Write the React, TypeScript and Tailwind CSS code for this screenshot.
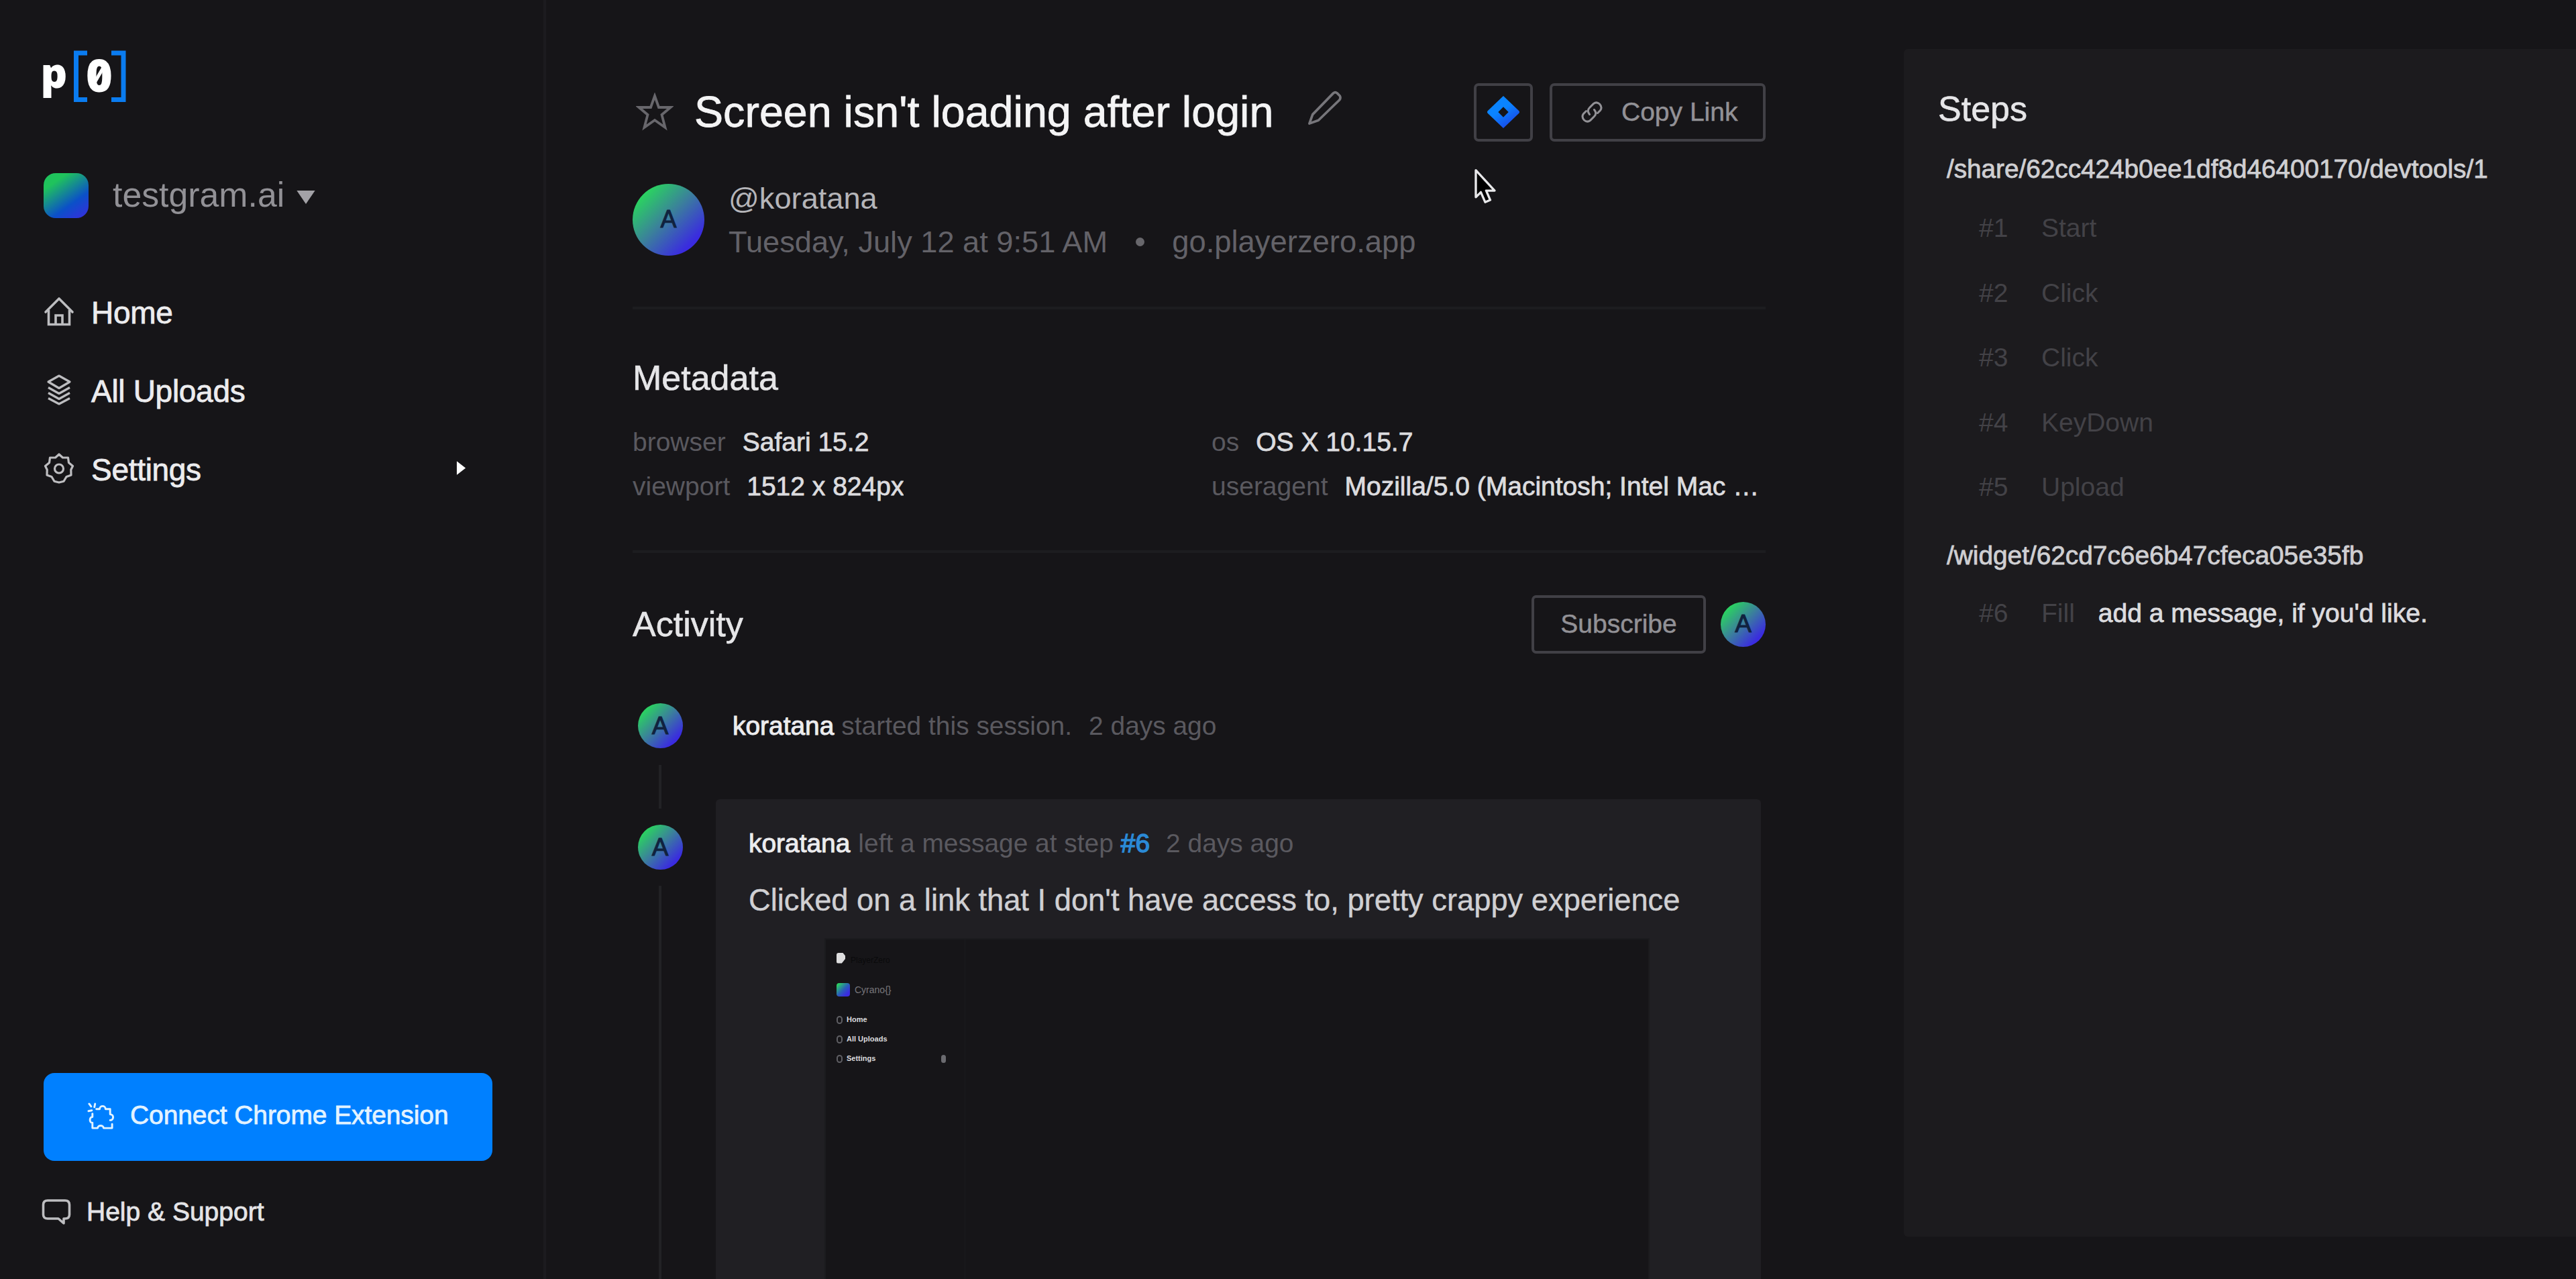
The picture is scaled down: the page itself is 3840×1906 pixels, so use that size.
import type { ReactNode } from "react";

const steps = [
  { id: "#1", label: "Start" },
  { id: "#2", label: "Click" },
  { id: "#3", label: "Click" },
  { id: "#4", label: "KeyDown" },
  { id: "#5", label: "Upload" },
];

const Logo = () => (
  <svg className="-ml-[15px] h-[130px] w-[150px] overflow-visible" viewBox="50 40 150 130" fill="none">
    <path d="M130 79H113.500V148.500H130M166 79H184V148.500H166" stroke="#0a7cf0" strokeWidth="7" />
    <text x="60.500" y="131" fill="#fff" fontFamily="Noto Sans, sans-serif" fontWeight="900" fontSize="62">
      p
    </text>
    <text
      x="148"
      y="137"
      fill="#fff"
      textAnchor="middle"
      fontFamily="Noto Sans, sans-serif"
      fontWeight="900"
      fontSize="68"
    >
      0
    </text>
    <path d="M141 123L155 99" stroke="#fff" strokeWidth="5" />
  </svg>
);

const HomeIcon = () => (
  <svg className="size-[46px]" viewBox="0 0 46 46" fill="none" stroke="currentColor" strokeWidth="3.6">
    <path d="M3 24L23 4L43 24" strokeLinecap="round" strokeLinejoin="round" />
    <path d="M7.500 21V42.500H38.500V21" />
    <path d="M18 42V29H28V42" />
  </svg>
);

const LayersIcon = () => (
  <svg className="size-[46px]" viewBox="0 0 46 46" fill="none" stroke="currentColor" strokeWidth="3.2" strokeLinejoin="round">
    <path d="M23 2L39 11L23 20.500L7 11Z" />
    <path d="M7 19.500L23 28.500L39 19.500" />
    <path d="M7 27.500L23 36.500L39 27.500" />
    <path d="M7 35.500L23 44L39 35.500" />
  </svg>
);

const GearIcon = () => (
  <svg className="size-[46px]" viewBox="0 0 46 46" fill="none" stroke="currentColor" strokeWidth="3.2" strokeLinejoin="round">
    <path d="M23 2L28.500 7L36.500 7L37.500 14.500L43.500 19.500L40.800 25L41 33L34 35.500L30 42.300L23 44L16 42.300L12 35.500L5 33L5.200 25L2.500 19.500L8.500 14.500L9.500 7L17.500 7Z" />
    <circle cx="23" cy="23.500" r="6.500" />
  </svg>
);

const PuzzleIcon = () => (
  <svg className="mt-1 size-[43px]" viewBox="0 0 44 44" fill="none" stroke="currentColor" strokeWidth="3" strokeLinecap="round" strokeLinejoin="round">
    <path d="M4 2L7 6M13 2L12 7M3 13L8 12" />
    <path d="M15 10H20C20 4 29 4 29 10H36V18C42 18 42 27 36 27" />
    <path d="M9 17V22C4 22 4 31 9 31V39H17C17 34 26 34 26 39H39V33" />
  </svg>
);

const ChatIcon = () => (
  <svg className="h-[42px] w-[46px]" viewBox="0 0 46 42" fill="none" stroke="currentColor" strokeWidth="3.6" strokeLinejoin="round">
    <path d="M10 4H36Q42.500 4 42.500 10.500V25Q42.500 31 36 31H34V38L26 31H10Q3.500 31 3.500 25V10.500Q3.500 4 10 4Z" />
  </svg>
);

const StarIcon = () => (
  <svg className="h-[58px] w-[56px]" viewBox="0 0 56 58" fill="none" stroke="currentColor" strokeWidth="3.800">
    <path d="M28 5L34 22H51.500L38.500 33L43.500 52L28 41L12.500 52L17.500 33L4.500 22H22Z" />
  </svg>
);

const PencilIcon = () => (
  <svg className="size-[52px]" viewBox="0 0 54 54" fill="none" stroke="currentColor" strokeWidth="3.800" strokeLinejoin="round">
    <path d="M3 51L8 37L40 4Q43 1.500 46 4L50 8Q52 11.500 49.500 14.500L17 46Z" />
  </svg>
);

const LinkIcon = () => (
  <svg className="size-[34px]" viewBox="0 0 34 34" fill="none" stroke="currentColor" strokeWidth="3" strokeLinecap="round">
    <path d="M13.500 20.500Q9 15 13.500 10.500L19.500 4.500Q24 1 28.500 5Q33 10 29.500 14.500L25.500 18.500" />
    <path d="M20.500 13.500Q25 19 20.500 23.500L14.500 29.500Q10 33 5.500 29Q1 24 4.500 19.500L8.500 15.500" />
  </svg>
);

const JiraIcon = () => (
  <svg className="size-[50px]" viewBox="0 0 52 52">
    <defs>
      <linearGradient id="jira" x1="0" y1="0" x2="0.7" y2="1">
        <stop offset="0.500" stopColor="#0a84ff" />
        <stop offset="1" stopColor="#1a45e8" />
      </linearGradient>
    </defs>
    <path
      fillRule="evenodd"
      fill="url(#jira)"
      d="M26 1L50 24Q52 26 50 28L26 51L2 28Q0 26 2 24ZM26 18L18 26L26 34L34 26Z"
    />
  </svg>
);

const Cursor = () => (
  <svg className="absolute left-[2196px] top-[250px] h-[56px] w-[36px]" viewBox="0 0 38 60">
    <path
      d="M4 4V47L12 39L19 55L27 51.500L20.500 36.500H34Z"
      fill="#000"
      stroke="#e8e8ea"
      strokeWidth="3.600"
      strokeLinejoin="round"
    />
  </svg>
);

const Avatar = ({ large }: { large?: boolean }) => (
  <div
    className={
      large
        ? "flex size-[107px] shrink-0 items-center justify-center rounded-full bg-[linear-gradient(135deg,#2bd062_16%,#3b7f9c_48%,#3a2be0_82%)] text-[36px] text-[#10223f] [-webkit-text-stroke:1px_#10223f]"
        : "flex size-[67px] shrink-0 items-center justify-center rounded-full bg-[linear-gradient(135deg,#2bd062_16%,#3b7f9c_48%,#3a2be0_82%)] text-[37px] text-[#10223f] [-webkit-text-stroke:1px_#10223f]"
    }
  >
    A
  </div>
);

const NavItem = ({ icon, children }: { icon: ReactNode; children: ReactNode }) => (
  <div className="flex h-[117px] items-center text-[46px] text-[#ececee] [-webkit-text-stroke:0.8px]">
    <span className="mb-2 text-[#bdbdc0]">{icon}</span>
    <span className="mb-[2px] ml-[25px] tracking-[-0.3px]">{children}</span>
    {children === "Settings" && (
      <svg className="mb-2 ml-auto mr-[115px] h-[23px] w-[15px]" viewBox="0 0 16 24" fill="#fff">
        <path d="M1 1L15 12L1 23Z" />
      </svg>
    )}
  </div>
);

const Sidebar = () => (
  <aside className="flex w-[814px] shrink-0 flex-col border-r-4 border-[#1c1b1f] pb-[70px] pl-[65px] pt-10">
    <Logo />
    <div className="mt-[87px] flex h-[68px] items-center">
      <div className="size-[67px] rounded-[18px] bg-[linear-gradient(145deg,#1fc35c_22%,#0b50c8_66%,#3a2be0_100%)]" />
      <span className="ml-[36px] text-[51.800px] text-[#929196]">testgram.ai</span>
      <svg className="ml-[18px] mt-[6px] h-[20px] w-[28px]" viewBox="0 0 30 22" fill="#a3a2a7">
        <path d="M0 0H30L15 22Z" />
      </svg>
    </div>
    <nav className="mt-[84px]">
      <NavItem icon={<HomeIcon />}>Home</NavItem>
      <NavItem icon={<LayersIcon />}>All Uploads</NavItem>
      <NavItem icon={<GearIcon />}>Settings</NavItem>
    </nav>
    <button className="mb-[46px] mt-auto flex h-[131px] w-[669px] items-center rounded-[16px] bg-[#0080ff] pb-1 pl-[64px] text-[39px] text-[#e3f3ff] [-webkit-text-stroke:0.8px]">
      <PuzzleIcon />
      <span className="ml-[22px] tracking-[-0.1px]">Connect Chrome Extension</span>
    </button>
    <div className="-ml-1 flex h-[60px] items-center text-[39px] text-[#e4e4e7] [-webkit-text-stroke:0.8px]">
      <span className="text-[#bdbdc0]">
        <ChatIcon />
      </span>
      <span className="ml-[22px]">Help &amp; Support</span>
    </div>
  </aside>
);

const Meta = ({ name, value }: { name: string; value: string }) => (
  <div className="flex gap-[25px]">
    <span className="text-[#5a595f]">{name}</span>
    <span className="truncate text-[#dcdcdf] [-webkit-text-stroke:0.8px]">{value}</span>
  </div>
);

/* Scaled down capture of the app attached to the message */
const Capture = () => (
  <div className="ml-[113px] mt-[26px] flex w-[1230px] grow border-2 border-b-0 border-[#1b1b1e] bg-[#161518]">
    <div className="w-[208px] border-r border-[#1a1a1d] pl-4 pt-[15px]">
      <div className="flex items-center">
        <span className="h-[16px] w-[13px] rounded-[3px] bg-[#dededf] [clip-path:polygon(0_0,70%_0,100%_30%,100%_60%,60%_100%,0_100%)]" />
        <span className="ml-2 mt-2 text-[12px] leading-[17px] text-[#0a0a0b]">PlayerZero</span>
      </div>
      <div className="mt-[24px] flex h-[22px] items-center">
        <span className="size-5 rounded-[4px] bg-[linear-gradient(135deg,#2bd062_10%,#2a5fb8_50%,#3a2be0_80%)]" />
        <span className="ml-[7px] text-[14px] text-[#77767b]">Cyrano{"{}"}</span>
      </div>
      <div className="mt-[19px] text-[11px] font-bold text-[#dcdcdf]">
        {["Home", "All Uploads", "Settings"].map((item) => (
          <div key={item} className="flex h-[29px] items-center">
            <span className="h-[12px] w-[9px] rounded-full border-2 border-[#5f5f64]" />
            <span className="ml-[6px]">{item}</span>
            {item === "Settings" && <span className="ml-auto mr-7 h-[12px] w-[7px] rounded-full bg-[#6b6b70]" />}
          </div>
        ))}
      </div>
    </div>
  </div>
);

const Session = () => (
  <main className="ml-[129px] flex w-[1689px] shrink-0 flex-col pt-[123px]">
    <header className="flex h-[88px] items-center">
      <span className="ml-[5px] text-[#68676c]">
        <StarIcon />
      </span>
      <h1 className="ml-[31px] whitespace-nowrap text-[64.600px] leading-[88px] text-[#f4f4f5] [-webkit-text-stroke:0.8px]">
        Screen isn't loading after login
      </h1>
      <span className="mb-3 ml-[51px] text-[#77767b]">
        <PencilIcon />
      </span>
      <button className="ml-auto flex h-[87px] w-[88px] items-center justify-center rounded-[7px] border-4 border-[#414046]">
        <JiraIcon />
      </button>
      <button className="ml-[25px] flex h-[87px] w-[322px] items-center rounded-[7px] border-4 border-[#414046] pl-[42px] text-[39px] text-[#929196] [-webkit-text-stroke:0.5px]">
        <LinkIcon />
        <span className="ml-[27px]">Copy Link</span>
      </button>
    </header>

    <div className="mt-[52px] flex h-[130px] items-center">
      <div className="mb-[2px]">
        <Avatar large />
      </div>
      <div className="ml-[36px] text-[45.200px] leading-[65px]">
        <div className="text-[#b5b5b9]">@koratana</div>
        <div className="flex items-center text-[#636268]">
          <span>Tuesday, July 12 at 9:51 AM</span>
          <span className="ml-[42px] mr-[41px] size-[13px] rounded-full bg-[#68676c]" />
          <span className="text-[45.400px]">go.playerzero.app</span>
        </div>
      </div>
    </div>

    <div className="mt-[64px] h-1 shrink-0 bg-[#1d1d20]" />

    <h2 className="mt-[72px] text-[52px] leading-[60px] text-[#e6e6e8] [-webkit-text-stroke:0.6px]">Metadata</h2>
    <div className="mt-[33px] grid grid-cols-[863px_826px] text-[39px] leading-[66px]">
      <Meta name="browser" value="Safari 15.2" />
      <Meta name="os" value="OS X 10.15.7" />
      <Meta name="viewport" value="1512 x 824px" />
      <Meta name="useragent" value="Mozilla/5.0 (Macintosh; Intel Mac …" />
    </div>

    <div className="mt-[62px] h-1 shrink-0 bg-[#1d1d20]" />

    <div className="mt-[62px] flex h-[88px] items-center">
      <h2 className="text-[52px] leading-[60px] text-[#e6e6e8] [-webkit-text-stroke:0.6px]">Activity</h2>
      <button className="ml-auto h-[87px] w-[260px] rounded-[7px] border-4 border-[#414046] text-[39px] text-[#929196] [-webkit-text-stroke:0.5px]">
        Subscribe
      </button>
      <div className="ml-[22px]">
        <Avatar />
      </div>
    </div>

    <div className="mt-[74px] flex min-h-0 grow text-[38.900px] text-[#5a595f]">
      <div className="ml-[7px] flex w-[68px] flex-col items-center">
        <Avatar />
        <div className="mt-[25px] h-[65px] w-1 bg-[#222225]" />
        <div className="mt-[24px]">
          <Avatar />
        </div>
        <div className="mt-6 w-1 grow bg-[#222225]" />
      </div>
      <div className="ml-[49px] flex w-[1558px] flex-col">
        <div className="flex h-[68px] items-center pl-[25px]">
          <span className="text-[#ececee] [-webkit-text-stroke:1px]">koratana</span>
          <span className="ml-[11px]">started this session.</span>
          <span className="ml-[25px]">2 days ago</span>
        </div>
        <article className="mt-[75px] flex grow flex-col rounded-t-[6px] bg-[#201f23] pl-[49px] pt-9">
          <div className="flex h-[60px] items-center">
            <span className="text-[#ececee] [-webkit-text-stroke:1px]">koratana</span>
            <span className="ml-[12px]">left a message at step</span>
            <span className="ml-[11px] text-[#2b8ad6] [-webkit-text-stroke:1.4px]">#6</span>
            <span className="ml-[24px]">2 days ago</span>
          </div>
          <p className="mt-[25px] whitespace-nowrap text-[45.300px] leading-[60px] text-[#d0d0d3] [-webkit-text-stroke:0.4px]">
            Clicked on a link that I don't have access to, pretty crappy experience
          </p>
          <Capture />
        </article>
      </div>
    </div>
  </main>
);

const StepsPanel = () => (
  <section className="ml-[206px] mt-[73px] h-[1770px] grow rounded-l-[6px] bg-[#1c1b1e] pl-[51px] pt-[59px] text-[39px] text-[#434247]">
    <h2 className="text-[52px] leading-[60px] text-[#e6e6e8] [-webkit-text-stroke:0.6px]">Steps</h2>
    <div className="mt-[30px] pl-[13px] text-[38.700px] leading-[60px] text-[#cfcfd2] [-webkit-text-stroke:0.8px]">
      /share/62cc424b0ee1df8d46400170/devtools/1
    </div>
    <div className="mt-[10px] pl-[61px]">
      {steps.map((step) => (
        <div key={step.id} className="flex h-[96.500px] items-center">
          <span className="w-[93px]">{step.id}</span>
          <span>{step.label}</span>
        </div>
      ))}
    </div>
    <div className="mt-[23px] pl-[13px] text-[38.800px] leading-[60px] text-[#cfcfd2] [-webkit-text-stroke:0.8px]">
      /widget/62cd7c6e6b47cfeca05e35fb
    </div>
    <div className="mt-[9px] flex h-24 items-center pl-[61px]">
      <span className="w-[93px]">#6</span>
      <span>Fill</span>
      <span className="ml-[35px] text-[#dcdcdf] [-webkit-text-stroke:0.8px]">add a message, if you'd like.</span>
    </div>
  </section>
);

export default function App() {
  return (
    <div className="relative flex h-[1906px] w-[3840px] overflow-hidden bg-[#161518] font-['Liberation_Sans',Arial,sans-serif]">
      <Sidebar />
      <Session />
      <StepsPanel />
      <Cursor />
    </div>
  );
}
